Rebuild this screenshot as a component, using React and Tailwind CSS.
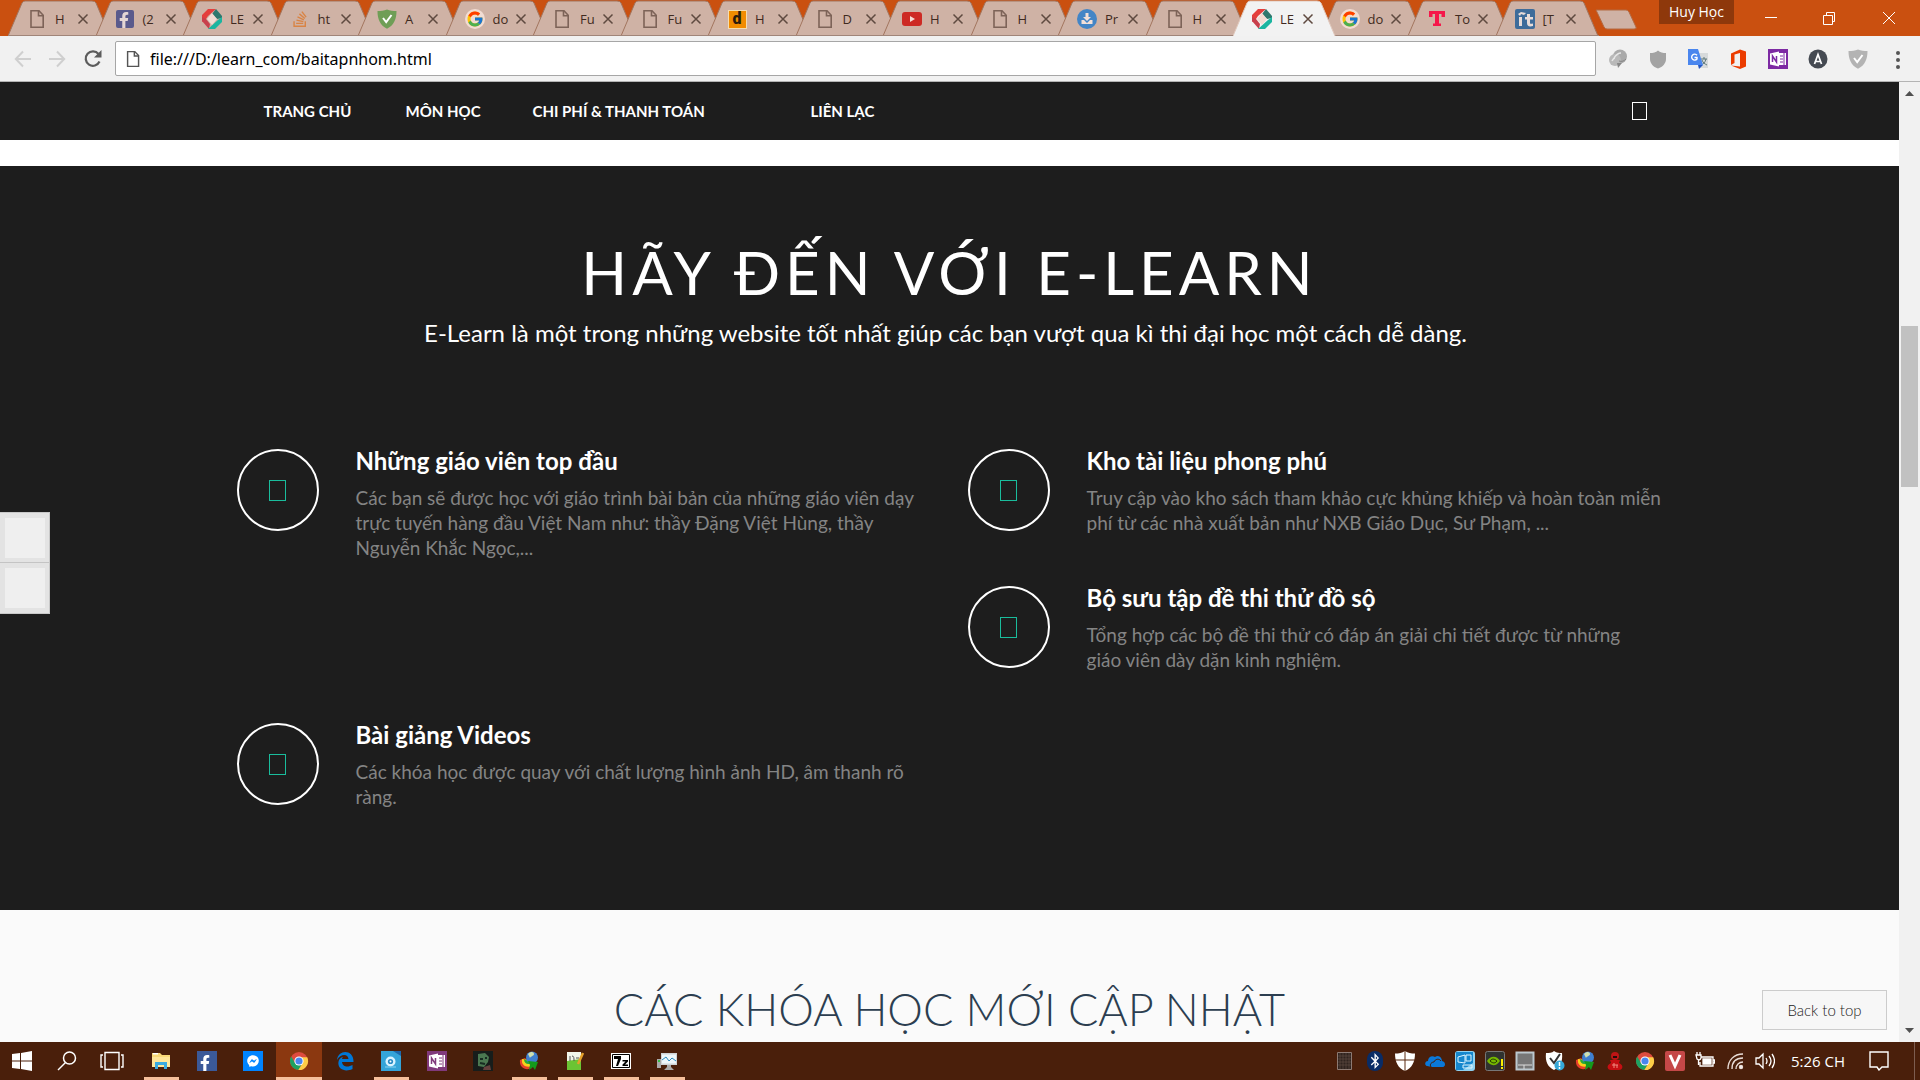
import React from "react";
import { FaFacebookF, FaStackOverflow, FaBluetoothB, FaFacebookMessenger } from "react-icons/fa";
import { FcGoogle } from "react-icons/fc";

function PageIcon({ color = "#7d6358", size = "size-5" }) {
  return (
    <svg className={size} viewBox="0 0 20 20" fill="none" stroke={color} strokeWidth="1.6">
      <path d="M4 1.8h8l4.2 4.4v12H4z" />
      <path d="M11.5 2v4.7h4.5" />
    </svg>
  );
}

function HexIcon() {
  return (
    <svg className="size-5" viewBox="0 0 20 20">
      <path d="M6 0h8L6 7 4 10 0 13V6z" fill="#e43f3d" />
      <path d="M0 8l4 2 4 5-1 5-7-8z" fill="#c8404c" />
      <path d="M14 0l6 7v2l-5 1-5-5z" fill="#2f786e" />
      <path d="M20 8v5l-7 7H6l10-9z" fill="#1bb5a0" />
      <path d="M10 4l5 6-5 6-5-6z" fill="#f2dcd3" />
    </svg>
  );
}

function ShieldIcon({ fill }) {
  return (
    <svg className="size-5" viewBox="0 0 20 20">
      <path d="M10 .5c3 1 6 1.600 9.500 1.600C19.500 10 17 16.500 10 19.800 3 16.500.5 10 .5 2.100 4 2.100 7 1.500 10 .5z" fill={fill} />
      <path d="M6 9l3.200 4L14.500 6" fill="none" stroke="#fff" strokeWidth="2" />
    </svg>
  );
}

function ChromeIcon() {
  return (
    <svg className="size-5" viewBox="0 0 20 20">
      <circle cx="10" cy="10" r="9" fill="#dd4b3e" />
      <path d="M2.200 5.500A9 9 0 0 0 9.500 19l4-7-3.500 2-4-2z" fill="#1da261" />
      <path d="M18.200 6.200A9 9 0 0 1 9.300 19l4.500-7L13 6.200z" fill="#ffcd46" />
      <circle cx="10" cy="10" r="4.600" fill="#fff" />
      <circle cx="10" cy="10" r="3.600" fill="#4a86ed" />
    </svg>
  );
}

function IdmIcon() {
  return (
    <svg className="size-5" viewBox="0 0 20 20">
      <path d="M1 9c-1 8 6 11 12 8l-3-6-4-4z" fill="#e8402a" />
      <path d="M3 8c-1 7 5 9 10 7l-3-6z" fill="#f7d21c" />
      <path d="M5 8c0 5 4 6 8 4z" fill="#25a93b" />
      <circle cx="13" cy="6.500" r="6" fill="#3f7fd0" />
      <path d="M9 3c3-3 6-2 6 0s-3 2-4 4z" fill="#cfe0b0" />
      <path d="M9 10l10 1-3 8-2-3-4 3 1-5z" fill="#149a1c" />
    </svg>
  );
}

function OneNoteIcon({ fill = "#80397b" }) {
  return (
    <svg className="size-5" viewBox="0 0 20 20">
      <path d="M0 0h20v20H0z" fill={fill} />
      <path d="M11 4h7v12h-7z" fill="#fff" />
      <path d="M12 7h3M12 10h3M12 13h3M16 4v12" stroke={fill} />
      <path d="M2 4.500l9-2v15l-9-2z" fill="#fff" />
      <path d="M4.500 13V7l4 6V7" fill="none" stroke={fill} strokeWidth="1.500" />
    </svg>
  );
}

function TabIcon({ type }) {
  switch (type) {
    case "page":
      return <PageIcon />;
    case "facebook":
      return (
        <span className="flex size-[18px] items-end justify-end rounded-xs bg-[#5a5a8c] pr-0.5 text-[#e4d6d4]">
          <FaFacebookF className="size-4" />
        </span>
      );
    case "hex":
      return <HexIcon />;
    case "stack":
      return <FaStackOverflow className="size-[18px] text-[#d98445]" />;
    case "shield":
      return <ShieldIcon fill="#6f9e56" />;
    case "google":
      return (
        <span className="flex size-5 items-center justify-center rounded-full bg-[#f2dcd3]">
          <FcGoogle className="size-[18px]" />
        </span>
      );
    case "d":
      return (
        <span className="flex size-[19px] items-center justify-center border border-[#f6dcae] bg-[#f28c00] font-['Roboto'] text-base leading-4 font-black text-[#2c1c0c]">
          d
        </span>
      );
    case "youtube":
      return (
        <svg className="size-5" viewBox="0 0 20 20">
          <rect x="0" y="3" width="20" height="14" rx="3" fill="#cd2a24" />
          <path d="M8 7l5 3-5 3z" fill="#f6dcd4" />
        </svg>
      );
    case "download":
      return (
        <svg className="size-5" viewBox="0 0 20 20">
          <circle cx="10" cy="10" r="10" fill="#4385c6" />
          <path d="M8.500 4h3v4H14l-4 4-4-4h2.500z" fill="#f2e0d8" />
          <path d="M4.500 11H7l3 3 3-3h2.500v4h-11z" fill="#f2e0d8" />
        </svg>
      );
    case "t":
      return (
        <svg className="size-5" viewBox="0 0 20 20">
          <path d="M2 2h16v6h-3.500V5H12v9.500h2V17H6v-2.500h2V5H5.500v3H2z" fill="#f5174a" />
        </svg>
      );
    case "it":
      return (
        <svg className="size-5" viewBox="0 0 20 20">
          <rect width="20" height="20" rx="2" fill="#3e6c9a" />
          <path d="M4 8h3v9H4zM3 5l3-2 5 1-2 2-3-1-1 2zM12 5h3v3h3v2.500h-3V14c0 1 1 1 3 .5V17c-4 1-6 0-6-3v-3.500h-2V8h2z" fill="#e8dcd8" />
        </svg>
      );
    default:
      return null;
  }
}

const tabs = [
  ["page", "H"], ["facebook", "(2"], ["hex", "LE"], ["stack", "ht"], ["shield", "A"], ["google", "do"],
  ["page", "Fu"], ["page", "Fu"], ["d", "H"], ["page", "D"], ["youtube", "H"], ["page", "H"],
  ["download", "Pr"], ["page", "H"], ["hex", "LE"], ["google", "do"], ["t", "To"], ["it", "[T"],
];

function Tab({ icon, title, active }) {
  return (
    <div className={active ? "relative z-10 h-9 flex-1" : "relative h-9 flex-1"}>
      <svg className="absolute top-0 left-0 h-9 w-[103px]" viewBox="0 0 103 36" fill="none">
        <path d="M0 36L14 3Q15 1 17 1H84Q87 1 88 3L102 36z" fill={active ? "#f2f2f2" : "#cfb2a5"} />
        <path d="M0 36L14 3Q15 1 17 1H84Q87 1 88 3L102 36" stroke={active ? "#e0c8bc" : "#a2755f"} />
        {!active && <path d="M0 35.500H103" stroke="#a08579" />}
      </svg>
      <div className="relative flex h-full items-center pt-0.5 pl-[19px]">
        <span className="flex w-5 justify-center"><TabIcon type={icon} /></span>
        <span className="ml-2 w-4 text-[13px] leading-5 whitespace-nowrap text-[#3f2a20]">{title}</span>
        <button aria-label={"Close " + title} className="ml-0.5 p-1 text-[#5f4a40]">
          <svg className="size-3" viewBox="0 0 12 12" stroke="currentColor" strokeWidth="1.500"><path d="M1.500 1.500l9 9M10.500 1.500l-9 9" /></svg>
        </button>
      </div>
    </div>
  );
}

function TabStrip() {
  return (
    <header className="flex h-9 shrink-0 justify-between bg-[#ca5010]">
      <div className="flex">
        <div className="ml-2 flex w-[1575px]">
          {tabs.map(([icon, title], i) => <Tab key={i} icon={icon} title={title} active={i === 14} />)}
        </div>
        <button aria-label="New tab" className="ml-3 h-9">
          <svg className="h-9 w-11" viewBox="0 0 44 36"><path d="M1 10h30q2 0 3 2l7 15q1 2-2 2H12q-2 0-3-2z" fill="#cfb2a5" stroke="#b46a43" /></svg>
        </button>
      </div>
      <div className="flex items-start text-white">
        <span className="mr-2 flex h-6 w-[75px] items-center justify-center bg-[#8e380b] text-sm">Huy Học</span>
        <button aria-label="Minimize" className="flex h-9 w-[58px] items-center justify-center">
          <svg className="size-3.5" viewBox="0 0 14 14" stroke="currentColor"><path d="M1 6.500h12" /></svg>
        </button>
        <button aria-label="Restore" className="flex h-9 w-[58px] items-center justify-center">
          <svg className="size-3.5" viewBox="0 0 14 14" stroke="currentColor" fill="none"><path d="M1.500 4.500h9v9h-9zM4.500 4V1.500h8v9H11" /></svg>
        </button>
        <button aria-label="Close" className="flex h-9 w-[62px] items-center justify-center">
          <svg className="size-3.5" viewBox="0 0 14 14" stroke="currentColor"><path d="M1 1l12 12M13 1L1 13" /></svg>
        </button>
      </div>
    </header>
  );
}

function Toolbar() {
  return (
    <div className="flex h-[46px] shrink-0 items-center border-b border-[#b4b4b4] bg-[#f1f1f1]">
      <button aria-label="Back" className="ml-3 p-0.5 text-[#cfcfcf]">
        <svg className="size-[18px]" viewBox="0 0 18 18" fill="none" stroke="currentColor" strokeWidth="2"><path d="M17 9H2M9 1.500L1.800 9 9 16.500" /></svg>
      </button>
      <button aria-label="Forward" className="ml-3 p-0.5 text-[#cfcfcf]">
        <svg className="size-[18px]" viewBox="0 0 18 18" fill="none" stroke="currentColor" strokeWidth="2"><path d="M1 9h15M9 1.500L16.200 9 9 16.500" /></svg>
      </button>
      <button aria-label="Reload" className="ml-[13px] p-0.5 text-[#5c5c5c]">
        <svg className="size-5" viewBox="0 0 20 20"><path d="M16.500 12.500A7.200 7.200 0 1 1 15.500 5" fill="none" stroke="currentColor" strokeWidth="2.200" /><path d="M18.500 1v7.500H11z" fill="currentColor" /></svg>
      </button>
      <div className="ml-2.5 flex h-[35px] flex-1 items-center rounded-xs border border-[#a6a6a6] bg-white pl-2">
        <PageIcon color="#555" size="size-[18px]" />
        <input aria-label="Address" defaultValue="file:///D:/learn_com/baitapnhom.html" className="ml-2 min-w-0 flex-1 bg-transparent font-['Noto_Sans'] text-base text-black outline-none" />
      </div>
      <div className="mr-3 ml-3 flex items-center gap-5">
        <svg className="size-5" viewBox="0 0 20 20"><circle cx="12" cy="7.500" r="7" fill="#aaa" /><circle cx="7" cy="11" r="6" fill="#b9b9b9" /><path d="M6 9c2-3 4-5 7-5M4 12c1-2 2-3 3-3" stroke="#e6e6e6" fill="none" strokeWidth="1.500" /><path d="M11 12c3 1 5 0 7-2" stroke="#858585" fill="none" /><path d="M9 14h5l-4 5z" fill="#888" /></svg>
        <svg className="size-5" viewBox="0 0 20 20"><path d="M10 1.500c2 2 5 2.500 8 2.500v6c0 4-3 8-8 9.500C5 18 2 14 2 10V4c3 0 6-.5 8-2.500z" fill="#a3a3a3" /></svg>
        <svg className="size-5" viewBox="0 0 20 20"><path d="M8 4h12v15H12z" fill="#d7dadb" /><path d="M13 10h6M16 8v2M18 10c-1 4-3 5-5 6M14 11c1 3 3 4 5 5" stroke="#5d7778" fill="none" /><path d="M0 0h10l5 16H0z" fill="#4a86ee" /><path d="M10 16h5l-4 4z" fill="#2457c5" /><path d="M9 6.200A3 3 0 1 0 9 10V8.500H6.500" stroke="#fff" strokeWidth="1.400" fill="none" /></svg>
        <svg className="size-5" viewBox="0 0 20 20"><path d="M3 4.500L12 .5l6 2v15l-6 2.500-9-3.500 9 1V4L6.500 5.500v8.500L3 16z" fill="#eb3c00" /></svg>
        <OneNoteIcon fill="#7d2aa3" />
        <svg className="size-5" viewBox="0 0 20 20"><circle cx="10" cy="10" r="9.500" fill="#454a52" /><path d="M6.500 15L10 5.500l3.500 9.500M7 12.500h6" fill="none" stroke="#fff" strokeWidth="1.700" /></svg>
        <ShieldIcon fill="#b3b3b3" />
        <button aria-label="Menu" className="flex w-5 justify-center"><svg className="h-5 w-1" viewBox="0 0 4 20" fill="#555"><circle cx="2" cy="4" r="2" /><circle cx="2" cy="11" r="2" /><circle cx="2" cy="18" r="2" /></svg></button>
      </div>
    </div>
  );
}

function Feature({ title, lines, place = "" }) {
  return (
    <article className={"flex min-h-[137px] px-[18px] " + place}>
      <div className="flex size-[82px] shrink-0 items-center justify-center rounded-full border-2 border-white">
        <span className="h-[21px] w-[17px] border border-[#1abc9c]" />
      </div>
      <div className="ml-[37px] flex-1">
        <h3 className="text-2xl leading-6 font-bold text-white">{title}</h3>
        <p className="mt-3 text-[19px] leading-[25px] text-[#848484]">
          {lines.map((line) => <span key={line} className="block">{line}</span>)}
        </p>
      </div>
    </article>
  );
}

function SitePage() {
  return (
    <main className="relative flex min-w-0 flex-1 flex-col overflow-hidden bg-white font-['Lato','Noto_Sans',sans-serif]">
      <nav className="h-[58px] shrink-0 bg-[#1d1d1d] text-white">
        <div className="mx-auto flex h-full max-w-[1462px] items-center pr-[34px] pl-[45px] text-[15px] font-bold">
          <a href="#home" className="w-[142px]">TRANG CHỦ</a>
          <a href="#subjects" className="w-[127px]">MÔN HỌC</a>
          <a href="#pricing" className="w-[278px]">CHI PHÍ &amp; THANH TOÁN</a>
          <a href="#contact">LIÊN LẠC</a>
          <button aria-label="Search" className="ml-auto h-[18px] w-[15px] border border-white" />
        </div>
      </nav>
      <section className="mt-[26px] shrink-0 bg-[#1d1d1d] pt-[67px] pb-[50px] text-white">
        <div className="text-center">
          <h2 className="text-6xl leading-[78px] font-normal tracking-[5px]">HÃY ĐẾN VỚI E-LEARN</h2>
          <p className="mt-2 pr-2 text-2xl leading-7">E-Learn là một trong những website tốt nhất giúp các bạn vượt qua kì thi đại học một cách dễ dàng.</p>
        </div>
        <div className="mx-auto mt-[102px] grid max-w-[1462px] grid-cols-2">
          <Feature title="Những giáo viên top đầu" lines={["Các bạn sẽ được học với giáo trình bài bản của những giáo viên dạy", "trực tuyến hàng đầu Việt Nam như: thầy Đặng Việt Hùng, thầy", "Nguyễn Khắc Ngọc,..."]} />
          <Feature title="Kho tài liệu phong phú" lines={["Truy cập vào kho sách tham khảo cực khủng khiếp và hoàn toàn miễn", "phí từ các nhà xuất bản như NXB Giáo Dục, Sư Phạm, ..."]} />
          <Feature title="Bộ sưu tập đề thi thử đồ sộ" place="col-start-2" lines={["Tổng hợp các bộ đề thi thử có đáp án giải chi tiết được từ những", "giáo viên dày dặn kinh nghiệm."]} />
          <Feature title="Bài giảng Videos" place="col-start-1" lines={["Các khóa học được quay với chất lượng hình ảnh HD, âm thanh rõ", "ràng."]} />
        </div>
      </section>
      <section className="flex-1 bg-[#fafafa] pt-[69px] text-center">
        <h2 className="text-[45px] leading-[60px] font-light text-[#2c3e50]">CÁC KHÓA HỌC MỚI CẬP NHẬT</h2>
      </section>
      <div className="absolute top-[430px] left-0 w-[50px] border border-l-0 border-[#c8c8c8] bg-[#e3e3e3]">
        <button aria-label="Previous" className="flex h-[50px] w-full items-center border-b border-[#c4c4c4] pl-[5px]"><span className="size-10 bg-[#efefef]" /></button>
        <button aria-label="Next" className="flex h-[50px] w-full items-center pl-[5px]"><span className="size-10 bg-[#efefef]" /></button>
      </div>
      <button className="absolute right-3 bottom-3 h-10 w-[125px] border border-[#ccc] bg-[#f7f7f7] text-[15px] font-light text-[#222]">Back to top</button>
    </main>
  );
}

function Scrollbar() {
  return (
    <div aria-hidden="true" className="flex w-[21px] shrink-0 flex-col items-center bg-[#f1f1f1]">
      <svg className="my-2 h-1.5 w-[9px]" viewBox="0 0 9 6"><path d="M0 6l4.500-5L9 6z" fill="#505050" /></svg>
      <div className="mt-[222px] h-[161px] w-[17px] bg-[#c1c1c1]" />
      <svg className="mt-auto mb-2 h-1.5 w-[9px]" viewBox="0 0 9 6"><path d="M0 0l4.500 5L9 0z" fill="#505050" /></svg>
    </div>
  );
}

const apps = [
  { name: "File Explorer", run: true, icon: <svg className="size-5" viewBox="0 0 20 20"><path d="M1 2h8l2 2h8v12H1z" fill="#f9d978" /><path d="M2 2h5v1.500H2z" fill="#fff" /><path d="M1 6h18v10H1z" fill="#ffe699" /><path d="M4 18v-7h12v7h-3v-4H7v4z" fill="#39aadf" /></svg> },
  { name: "Facebook", icon: <span className="flex size-5 items-end justify-end bg-[#3b5998] pr-1 text-white"><FaFacebookF className="size-4" /></span> },
  { name: "Messenger", icon: <span className="flex size-5 items-center justify-center bg-[#0084ff] text-white"><FaFacebookMessenger className="size-3" /></span> },
  { name: "Chrome", run: true, active: true, icon: <ChromeIcon /> },
  { name: "Edge", icon: <svg className="size-5" viewBox="0 0 20 20"><path d="M2 9C3-2 19-2 18.500 11H7c1 6 7 5 10.500 3v4C9 22 1 17 4 9c1-2 3-3 4-3-1 1-1 2-1 2h6.500C13 2 5 3 2 9z" fill="#0078d7" /></svg> },
  { name: "Player", run: true, icon: <svg className="size-5" viewBox="0 0 20 20"><path d="M0 0h20v20H0z" fill="#34a4d8" /><path d="M12 0h8v5z" fill="#1c68ad" /><circle cx="9.500" cy="10.500" r="5" fill="#d9f3ff" /><circle cx="9.500" cy="10.500" r="2.600" fill="#2789c4" /><circle cx="9.500" cy="10.500" r="1" fill="#fff" /><path d="M4 16h11" stroke="#8ad3f2" /></svg> },
  { name: "OneNote", icon: <OneNoteIcon /> },
  { name: "Game", icon: <svg className="size-5" viewBox="0 0 20 20"><path d="M0 0h20v20H0z" fill="#171d1b" /><path d="M5 3l7-1 4 4-1 5-4 5-6-1z" fill="#4b7851" /><path d="M7 8h3M12 7h2M7 12l5 1" stroke="#172c22" strokeWidth="2" /><path d="M11 16l6-2 1 5h-8z" fill="#65403d" /></svg> },
  { name: "Download Manager", run: true, icon: <IdmIcon /> },
  { name: "Notepad++", run: true, icon: <svg className="size-5" viewBox="0 0 20 20"><path d="M2 1h14v18H2z" fill="#f2f5e9" /><path d="M2 10l14-2v11H2z" fill="#6bc433" /><path d="M5 5v5M7 5c2 0 2 2 2 5M11 7h3" stroke="#555" fill="none" /><path d="M18 2l-5 11" stroke="#e5a12a" strokeWidth="2.500" /></svg> },
  { name: "7-Zip", run: true, icon: <svg className="size-5" viewBox="0 0 20 20"><path d="M0 2h20v16H0z" fill="#fff" /><path d="M1.500 3.500h17v13h-17z" fill="none" stroke="#000" /><path d="M3 5h7v3l-3 7H5l2-7H3zM11.500 9H17v1.500L14 13.500h3V15h-5.500v-1.500l3-3h-3z" fill="#000" /></svg> },
  { name: "Monitor", run: true, icon: <svg className="size-5" viewBox="0 0 20 20"><path d="M0 8h4v9H0z" fill="#aaa" /><path d="M1 9h2v2H1z" fill="#38c04b" /><path d="M4 2h16v12H4z" fill="#cfd3d6" /><path d="M5 3.500h14v9H5z" fill="#eef7fb" /><path d="M5 9l4-3 3 4 3-3 4 3" fill="none" stroke="#2787bd" /><path d="M10 14h4v2l3 3H7l3-3z" fill="#aaa" /></svg> },
];

const tray = [
  <svg className="size-5" viewBox="0 0 20 20"><path d="M2.500 1.500h14v17h-14z" fill="#30231f" stroke="#8d7a73" /><path d="M5 2v16M8 2v16M11 2v16M14 2v16M3 5h13M3 8h13M3 11h13M3 14h13" stroke="#665148" strokeWidth=".6" /></svg>,
  <span className="flex h-5 w-4 items-center justify-center rounded-full bg-[#092c66] text-white"><FaBluetoothB className="size-4" /></span>,
  <svg className="size-5" viewBox="0 0 20 20"><path d="M10 0c3 2 6 2.500 10 2.500C20 11 17 17 10 20 3 17 0 11 0 2.500 4 2.500 7 2 10 0z" fill="#fff" /><path d="M10 0v20M0 9h20" stroke="#5a2a10" /></svg>,
  <svg className="size-5" viewBox="0 0 20 20"><path d="M2 15c-3-1-2-5 1-5 0-4 4-6 7-4 4-3 7 1 7 4 4 1 4 6 0 6H7c-2 0-3-1-5-1z" fill="#0b78d8" /><path d="M6 16c-2-3 1-5 3-5 1-3 5-4 7-1" stroke="#481e09" fill="none" /></svg>,
  <svg className="size-5" viewBox="0 0 20 20"><rect width="20" height="20" rx="3" fill="#8fd2f1" /><path d="M1 1h17v11L8 19H1z" fill="#1687cd" /><path d="M3 6l7-2v8l-7-1zM11 4h5v6h-5zM8 14h9v3H8z" stroke="#def5ff" fill="none" /></svg>,
  <svg className="size-5" viewBox="0 0 20 20"><rect x=".5" y=".5" width="19" height="19" rx="2" fill="#303330" stroke="#777" /><path d="M2 10c4-6 10-5 13 0-4 6-10 5-13 0z" fill="#76b900" /><path d="M5 10c2-3 5-2 7 0-2 3-5 2-7 0z" fill="none" stroke="#1d3000" /><path d="M16 8h2v7h-2zM16 16h2v2h-2z" fill="#fff000" /></svg>,
  <svg className="size-5" viewBox="0 0 20 20"><path d="M1.500 1.500h17v17h-17z" fill="#777" stroke="#bcc8ce" strokeWidth="2" /><path d="M3 14h14M9 14v4" stroke="#ddd" /></svg>,
  <svg className="size-5" viewBox="0 0 20 20"><path d="M9 0c3 2 5 2 8 2 1 9-2 14-8 17C3 16 0 11 1 2c3 0 6 0 8-2z" fill="#fff" /><path d="M5 7l4 5 6-9" stroke="#333" strokeWidth="2" fill="none" /><circle cx="14.500" cy="14.500" r="5" fill="#35a8d8" /><path d="M14.500 11v4M14.500 16v2" stroke="#fff" strokeWidth="1.500" /></svg>,
  <IdmIcon />,
  <svg className="size-5" viewBox="0 0 20 20"><circle cx="10" cy="5" r="4" fill="#bf1515" /><path d="M8 5h4v2H8z" fill="#270b0b" /><path d="M5 9h10l-1 3c5 2 4 7 0 7H6c-4 0-5-5 0-7z" fill="#c60e12" /><path d="M7 14h6M9 12v5M12 14v3" stroke="#f08b80" /></svg>,
  <ChromeIcon />,
  <svg className="size-5" viewBox="0 0 20 20"><rect width="20" height="20" rx="2" fill="#c54848" /><path d="M5 4l5 11 5-11" fill="none" stroke="#fff" strokeWidth="3" /></svg>,
  <svg className="size-5" viewBox="0 0 20 20" fill="none" stroke="#fff" strokeWidth="1.300"><path d="M6 6h12v9H5v-4M18 9h1.500v3H18M1 4h5v3q-1 3-4 1zM2 1v3M5 1v3M3.500 9v5" /><path d="M8 8h8v5H8z" fill="#fff" /></svg>,
  <svg className="size-5" viewBox="0 0 20 20" fill="none" stroke="#e9dcd6" strokeWidth="1.400"><path d="M3 18C3 9 9 3 18 3M7 18C7 11 11 7 18 7M11 18c0-4 3-7 7-7" /><circle cx="16" cy="16" r="1.500" fill="#fff" /></svg>,
  <svg className="size-5" viewBox="0 0 20 20" fill="none" stroke="#fff" strokeWidth="1.300"><path d="M1 7h3l4-4v14l-4-4H1zM11 7q2 3 0 6M14 5q4 5 0 10M17 3q5 7 0 14" /></svg>,
];

function Taskbar() {
  return (
    <footer className="flex h-[38px] shrink-0 items-center justify-between bg-[#4a1f0b] text-white">
      <div className="flex h-full items-center">
        <button aria-label="Start" className="flex w-[44px] justify-center"><svg className="size-5" viewBox="0 0 20 20" fill="#fff"><path d="M0 3l8-1v7.500H0zM9 2l11-2v9.500H9zM0 10.500h8V18l-8-1zM9 10.500h11V20L9 18z" /></svg></button>
        <button aria-label="Search Windows" className="flex w-[46px] justify-center"><svg className="size-5" viewBox="0 0 20 20" fill="none" stroke="#fff" strokeWidth="1.500"><circle cx="12.500" cy="7" r="6" /><path d="M8.500 11.500L1 19" /></svg></button>
        <button aria-label="Task view" className="mr-1 flex w-[44px] justify-center"><svg className="h-5 w-6" viewBox="0 0 24 20" fill="none" stroke="#fff" strokeWidth="1.400"><path d="M5 1.500h14v17H5zM3 4H1v12h2M21 4h2v12h-2" /></svg></button>
        {apps.map((a) => (
          <button key={a.name} aria-label={a.name} className={a.active ? "flex h-full w-[46px] flex-col items-center justify-between bg-[#8b3810] pt-[9px]" : "flex h-full w-[46px] flex-col items-center justify-between pt-[9px]"}>
            {a.icon}
            {a.run && <span className={a.active ? "h-[3px] w-full bg-[#f6c09c]" : "h-[3px] w-[35px] bg-[#f6c09c]"} />}
          </button>
        ))}
      </div>
      <div className="flex h-full items-center">
        <div className="flex gap-2.5">{tray.map((icon, i) => <span key={i} className="flex w-5 justify-center">{icon}</span>)}</div>
        <time className="mr-6 ml-4 text-[15px]">5:26 CH</time>
        <button aria-label="Notifications" className="mr-[25px]"><svg className="size-5" viewBox="0 0 20 20" fill="none" stroke="#fff" strokeWidth="1.400"><path d="M1 1h18v15h-6l-3 3-2-3H1z" /></svg></button>
        <span className="mr-[5px] h-full w-px bg-[#7d5d50]" />
      </div>
    </footer>
  );
}

export default function App() {
  return (
    <div className="flex h-screen flex-col overflow-hidden font-['Open_Sans','Noto_Sans',sans-serif]">
      <TabStrip />
      <Toolbar />
      <div className="flex min-h-0 flex-1">
        <SitePage />
        <Scrollbar />
      </div>
      <Taskbar />
    </div>
  );
}
